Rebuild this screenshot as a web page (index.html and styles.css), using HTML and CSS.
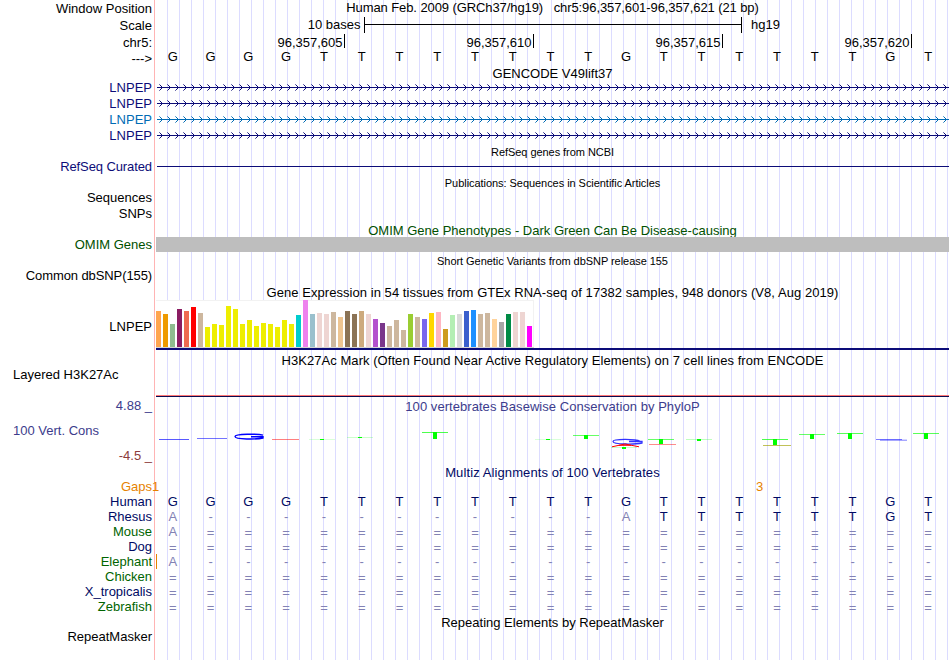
FILE: index.html
```html
<!DOCTYPE html>
<html lang="en">
<head>
    <meta charset="UTF-8">
    <meta name="viewport" content="width=device-width, initial-scale=1.0">
    <title>Human chr5:96,357,601-96,357,621</title>
    <link rel="stylesheet" href="styles.css">
</head>
<body>

    <div class="browser">
        <div class="row h17">
            <div class="label down1">Window Position</div>
            <div class="track title title-pos">Human Feb. 2009 (GRCh37/hg19)   chr5:96,357,601-96,357,621 (21 bp)</div>
        </div>
        <div class="row h17">
            <div class="label down1">Scale</div>
            <svg class="track" width="793" height="17">
                <text x="204.5" y="12" text-anchor="end">10 bases</text>
                <path class="tick" d="M208.5 0V16M585.5 0V16M208 7.5H586"/>
                <text x="595" y="12">hg19</text>
            </svg>
        </div>
        <div class="row h15">
            <div class="label down1">chr5:</div>
            <svg class="track" width="793" height="15">
                <text x="186.5" y="13" text-anchor="end">96,357,605</text>
                <text x="375.5" y="13" text-anchor="end">96,357,610</text>
                <text x="564.5" y="13" text-anchor="end">96,357,615</text>
                <text x="753.5" y="13" text-anchor="end">96,357,620</text>
                <path class="tick" d="M188.5 0V14M377.5 0V14M566.5 0V14M755.5 0V14"/>
            </svg>
        </div>
        <div class="row h16">
            <div class="label down2">---&gt;</div>
            <div class="track bases" data-seq="GGGGTTTTTTTTGTTTTTTGT"></div>
        </div>

        <div class="row h15">
            <div class="label"></div>
            <div class="track title down1">GENCODE V49lift37</div>
        </div>
        <div class="row h16 navy">
            <div class="label">LNPEP</div>
            <div class="track gene"></div>
        </div>
        <div class="row h16 navy">
            <div class="label">LNPEP</div>
            <div class="track gene"></div>
        </div>
        <div class="row h16 blue">
            <div class="label">LNPEP</div>
            <div class="track gene"></div>
        </div>
        <div class="row h16 navy">
            <div class="label">LNPEP</div>
            <div class="track gene"></div>
        </div>

        <div class="row h15">
            <div class="label"></div>
            <div class="track title small down1">RefSeq genes from NCBI</div>
        </div>
        <div class="row h16 navy">
            <div class="label tight">RefSeq Curated</div>
            <svg class="track" width="793" height="16">
                <path class="line" d="M1 7.5H793"/>
            </svg>
        </div>

        <div class="row h15">
            <div class="label"></div>
            <div class="track title small down1">Publications: Sequences in Scientific Articles</div>
        </div>
        <div class="row h16">
            <div class="label">Sequences</div>
        </div>
        <div class="row h16">
            <div class="label">SNPs</div>
        </div>

        <div class="row h15 green clip">
            <div class="label"></div>
            <div class="track title down1">OMIM Gene Phenotypes - Dark Green Can Be Disease-causing</div>
        </div>
        <div class="row h15 green">
            <div class="label">OMIM Genes</div>
            <div class="track omim-bar"></div>
        </div>

        <div class="row h16">
            <div class="label"></div>
            <div class="track title small down2">Short Genetic Variants from dbSNP release 155</div>
        </div>
        <div class="row h16">
            <div class="label tight">Common dbSNP(155)</div>
        </div>

        <div class="row h16">
            <div class="label"></div>
            <div class="track title down1 wide">Gene Expression in 54 tissues from GTEx RNA-seq of 17382 samples, 948 donors (V8, Aug 2019)</div>
        </div>
        <div class="row gtex-row">
            <div class="label">LNPEP</div>
            <div class="track gtex">
                <div class="bars" id="gtexBars"></div>
            </div>
        </div>

        <div class="row h15">
            <div class="label"></div>
            <div class="track title down1 wide">H3K27Ac Mark (Often Found Near Active Regulatory Elements) on 7 cell lines from ENCODE</div>
        </div>
        <div class="row h3k-row">
            <div class="label left">Layered H3K27Ac</div>
            <div class="track h3k"></div>
        </div>

        <div class="row h17 slate">
            <div class="label down1">4.88 _</div>
            <div class="track title down2 wide">100 vertebrates Basewise Conservation by PhyloP</div>
        </div>
        <div class="row phylo-row slate">
            <div class="label phylo-label">
                <span class="cons">100 Vert. Cons</span>
                <span class="maroon">-4.5 _</span>
            </div>
            <svg class="track" id="phylo" width="793" height="51"></svg>
        </div>

        <div class="row h14 ink">
            <div class="label"></div>
            <div class="track title wider">Multiz Alignments of 100 Vertebrates</div>
        </div>
        <div class="row h15 orange">
            <div class="label">Gaps</div>
            <svg class="track" width="793" height="15">
                <text x="-4" y="12">1</text>
                <text x="600" y="12">3</text>
            </svg>
        </div>
        <div class="row h15 ink">
            <div class="label">Human</div>
            <div class="track bases" data-seq="GGGGTTTTTTTTGTTTTTTGT"></div>
        </div>
        <div class="row h15 ink">
            <div class="label">Rhesus</div>
            <div class="track bases" data-seq="A-----------ATTTTTTGT" data-diff="13"></div>
        </div>
        <div class="row h15 forest">
            <div class="label">Mouse</div>
            <div class="track bases faded" data-seq="A===================="></div>
        </div>
        <div class="row h15 ink">
            <div class="label">Dog</div>
            <div class="track bases faded" data-seq="====================="></div>
        </div>
        <div class="row h15 forest">
            <div class="label">Elephant</div>
            <div class="track bases faded insert" data-seq="A--------------------"></div>
        </div>
        <div class="row h15 forest">
            <div class="label">Chicken</div>
            <div class="track bases faded" data-seq="====================="></div>
        </div>
        <div class="row h15 ink">
            <div class="label">X_tropicalis</div>
            <div class="track bases faded" data-seq="====================="></div>
        </div>
        <div class="row h15 forest">
            <div class="label">Zebrafish</div>
            <div class="track bases faded" data-seq="====================="></div>
        </div>

        <div class="row h15">
            <div class="label"></div>
            <div class="track title down1">Repeating Elements by RepeatMasker</div>
        </div>
        <div class="row h16">
            <div class="label">RepeatMasker</div>
        </div>
    </div>

    <script src="tracks.js"></script>
</body>
</html>
```
FILE: styles.css
```css
body {
    margin: 0;
    background-color: #ffffff;
    color: #000000;
    font-family: "Liberation Sans", Arial, Helvetica, sans-serif;
    font-size: 13px;
    line-height: 15px;
}
/* red divider at the label edge, then a guideline every 12px */
.browser {
    width: 949px;
    height: 660px;
    overflow: hidden;
    background-image:
        linear-gradient(#ffb4b4, #ffb4b4),
        linear-gradient(#ffffff, #ffffff),
        linear-gradient(to right, #dcdcff 1px, transparent 1px);
    background-size: 1px 100%, 156px 100%, 12px 100%;
    background-position: 154px 0, 0 0, 167px 0;
    background-repeat: no-repeat, no-repeat, repeat-x;
}
.row {
    display: flex;
}
.h14 { height: 14px; }
.h15 { height: 15px; }
.h16 { height: 16px; }
.h17 { height: 17px; }
.down1 { padding-top: 1px; }
.down2 { padding-top: 2px; }
.clip { overflow: hidden; }

.label {
    box-sizing: border-box;
    flex: none;
    width: 156px;
    padding-right: 4px;
    text-align: right;
    white-space: pre;
}
.label.left {
    padding-left: 13px;
    text-align: left;
}
.tight {
    letter-spacing: -0.1px;
}
.track {
    flex: none;
    width: 793px;
    overflow: visible;
}
.title {
    text-align: center;
    white-space: pre;
}
.title-pos {
    letter-spacing: -0.09px;
}
.wide {
    letter-spacing: 0.05px;
}
.wider {
    letter-spacing: 0.1px;
}
.small {
    font-size: 11px;
    letter-spacing: -0.05px;
}

.navy { color: #0c0c78; }
.blue { color: #006bb4; }
.green { color: #005000; }
.slate { color: #3c3c8c; }
.maroon { color: #8c3c3c; }
.ink { color: #000a64; }
.forest { color: #006400; }
.orange { color: #e68200; }

svg text {
    fill: currentColor;
}
.tick, .line {
    stroke: currentColor;
    fill: none;
    shape-rendering: crispEdges;
}
.tips {
    opacity: 0.6;
}

.bases {
    display: grid;
    grid-template-columns: repeat(21, 1fr);
    margin-left: -2px;
    text-align: center;
}
.bases .dim, .faded {
    color: #8282b4;
}
.bases .gap {
    padding-top: 1px;
}
.insert {
    margin-left: 0;
    box-shadow: inset 1px 0 #e68200;
}
.insert span {
    position: relative;
    left: -2px;
}

.omim-bar {
    background-color: #bebebe;
}

.gtex-row {
    height: 52px;
}
.gtex-row .label {
    padding-top: 19px;
}
.gtex {
    box-sizing: border-box;
    height: 50px;
    border-bottom: 2px solid #0c0c78;
}
.bars {
    box-sizing: border-box;
    display: flex;
    align-items: flex-end;
    gap: 2px;
    width: 378px;
    height: 48px;
    border-bottom: 1px solid #d3d3d3;
    background-color: #ffffff;
    box-shadow: inset 0 1px #f2f2f2, inset -1px 0 #f2f2f2;
}
.bar {
    flex: none;
    width: 5px;
}

.h3k-row {
    height: 30px;
}
.h3k {
    box-sizing: border-box;
    height: 30px;
    border-bottom: 1px solid #0c0c50;
    box-shadow: inset 0 -1px #ff7878;
}

.phylo-row {
    height: 51px;
}
.phylo-label {
    display: flex;
    flex-direction: column;
    gap: 10px;
    padding-top: 9px;
}
.cons {
    padding-left: 13px;
    text-align: left;
}
```
FILE: tracks.js
```js
// sequence rows: one cell per base
document.querySelectorAll('.bases').forEach(row => {
    const diff = Number(row.dataset.diff || 0);
    [...row.dataset.seq].forEach((base, i) => {
        const cell = document.createElement('span');
        cell.textContent = base;
        if (i < diff) {
            cell.classList.add('dim');
        }
        if (base === '=') {
            cell.classList.add('gap');
        }
        row.appendChild(cell);
    });
});

// intron lines with strand arrows, stepped one pixel per row
document.querySelectorAll('.gene').forEach(track => {
    let arrows = '';
    let tips = '';
    for (let x = 3; x < 790; x += 8) {
        tips += `M${x} 4.5h1M${x} 10.5h1`;
        arrows += `M${x + 1} 5.5h1M${x + 2} 6.5h1M${x + 2} 8.5h1M${x + 1} 9.5h1`;
    }
    track.innerHTML = `<svg width="793" height="16">
        <path class="line" d="M1 7.5H793${arrows}"/>
        <path class="line tips" d="${tips}"/>
    </svg>`;
});

// GTEx tissues: [height, color]
const tissues = [
    [36, '#ffa54f'], [33, '#ee9a00'], [23, '#8fbc8f'], [38, '#8b1c62'], [36, '#ee6a50'], [40, '#ff0000'],
    [34, '#cdb79e'], [20, '#eeee00'], [23, '#eeee00'], [22, '#eeee00'], [41, '#eeee00'], [38, '#eeee00'],
    [23, '#eeee00'], [27, '#eeee00'], [21, '#eeee00'], [24, '#eeee00'], [23, '#eeee00'], [20, '#eeee00'],
    [27, '#eeee00'], [23, '#eeee00'], [32, '#00cdcd'], [47, '#ee82ee'], [33, '#9ac0cd'], [34, '#eed5d2'],
    [33, '#eed5d2'], [35, '#cdb79e'], [30, '#eec591'], [36, '#8b7355'], [33, '#8b7355'], [36, '#cdaa7d'],
    [33, '#eed5d2'], [28, '#b452cd'], [24, '#7a378b'], [21, '#cdb79e'], [27, '#cdb79e'], [17, '#cdb79e'],
    [33, '#9acd32'], [30, '#cdb79e'], [28, '#7a67ee'], [34, '#ffd700'], [35, '#ffb6c1'], [18, '#cd9b1d'],
    [32, '#b4eeb4'], [33, '#d9d9d9'], [36, '#3a5fcd'], [37, '#1e90ff'], [33, '#cdb79e'], [34, '#cdb79e'],
    [28, '#ffd39b'], [25, '#a6a6a6'], [33, '#008b45'], [35, '#eed5d2'], [35, '#eed5d2'], [21, '#ff00ff']
];
document.getElementById('gtexBars').innerHTML = tissues
    .map(t => `<div class="bar" style="height: ${t[0]}px; background-color: ${t[1]}"></div>`)
    .join('');

// conservation logo, T glyphs: [left, top, stem height, crossbar opacity]
const marks = [
    [153, 25, 1, 0.15], [191, 23, 1, 0.2], [266, 18, 7, 0.7], [379, 25, 1, 0.15], [417, 21, 4, 0.6],
    [492, 25, 5, 0.6], [530, 25, 2, 0.25], [606, 25, 6, 0.7], [643, 20, 5, 0.6], [681, 19, 6, 0.65], [757, 19, 6, 0.65]
];
let logo = marks.map(([x, y, h, o]) =>
    `<rect x="${x}" y="${y}" width="26" height="1" fill="#00ff00" opacity="${o}"/>` +
    `<rect x="${x + 11}" y="${y}" width="4" height="${h}" fill="#00ff00"/>`).join('');
logo += `
    <g fill="none" stroke="#0000ff">
        <path d="M3 25.5H33" opacity="0.65"/>
        <path d="M41 24.5H71" opacity="0.55"/>
        <path d="M720 25.5H746M724 26.2H751" opacity="0.5"/>
        <path d="M107 21.2C102 19.8 79 19.6 79 22.5C79 25.6 101 25.4 107 24V22.8H95" stroke-width="1.4"/>
        <path d="M484 27.2C480 24.8 457 24.6 457 27.5C457 30.8 480 30.4 486 29V27.5H473" stroke-width="1.3" opacity="0.8"/>
    </g>
    <g fill="none" stroke="#ff0000">
        <path d="M116 25.5H143" opacity="0.5"/>
        <path d="M493 30.5H520" opacity="0.45"/>
        <path d="M456 32.8L469 30L483 32.8M463 31.3H475"/>
    </g>
    <path d="M607 31.5H635" stroke="#a0a000" opacity="0.65"/>
    <rect x="455" y="33" width="26" height="1" fill="#00ff00" opacity="0.2"/>
    <rect x="466" y="33" width="4" height="2" fill="#00ff00"/>`;
document.getElementById('phylo').innerHTML = logo;
```
